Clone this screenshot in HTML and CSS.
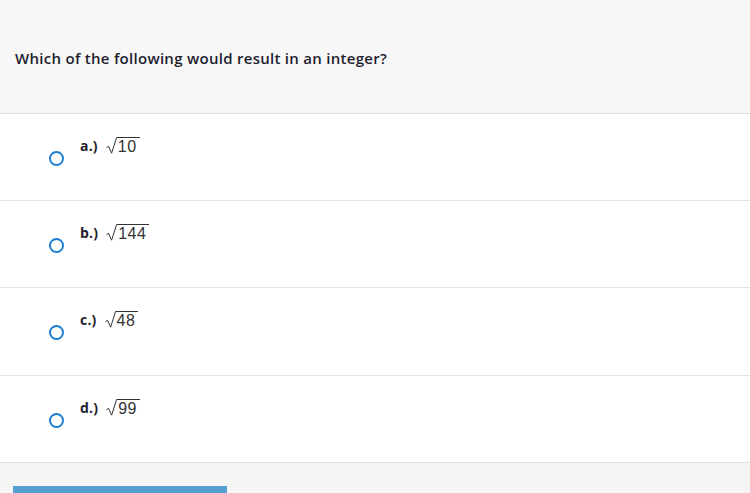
FILE: index.html
```html
<!DOCTYPE html>
<html>
<head>
<meta charset="utf-8">
<link rel="stylesheet" href="styles.css">
</head>
<body>
<div class="page">
  <div class="header">
    <p class="question">Which of the following would result in an integer?</p>
  </div>
  <div class="options">
    <div class="option">
      <span class="radio"></span>
      <span class="label">a.)</span>
      <span class="math"><svg class="rad" viewBox="0 0 11 17" width="11" height="17"><path d="M0.5 10.5 L2.6 9.4 L5.6 16.2 L10.6 0.5 L11 0.5" fill="none" stroke="#333" stroke-width="1"/></svg><span class="radicand">10</span></span>
    </div>
    <div class="option">
      <span class="radio"></span>
      <span class="label">b.)</span>
      <span class="math"><svg class="rad" viewBox="0 0 11 17" width="11" height="17"><path d="M0.5 10.5 L2.6 9.4 L5.6 16.2 L10.6 0.5 L11 0.5" fill="none" stroke="#333" stroke-width="1"/></svg><span class="radicand">144</span></span>
    </div>
    <div class="option tall">
      <span class="radio"></span>
      <span class="label">c.)</span>
      <span class="math"><svg class="rad" viewBox="0 0 11 17" width="11" height="17"><path d="M0.5 10.5 L2.6 9.4 L5.6 16.2 L10.6 0.5 L11 0.5" fill="none" stroke="#333" stroke-width="1"/></svg><span class="radicand">48</span></span>
    </div>
    <div class="option">
      <span class="radio"></span>
      <span class="label">d.)</span>
      <span class="math"><svg class="rad" viewBox="0 0 11 17" width="11" height="17"><path d="M0.5 10.5 L2.6 9.4 L5.6 16.2 L10.6 0.5 L11 0.5" fill="none" stroke="#333" stroke-width="1"/></svg><span class="radicand">99</span></span>
    </div>
  </div>
  <div class="footer">
    <div class="button"></div>
  </div>
</div>
</body>
</html>
```
FILE: styles.css
```css
html, body {
  margin: 0;
  padding: 0;
  background: #ffffff;
}
body {
  font-family: "Open Sans", "Liberation Sans", sans-serif;
  color: #1a1a2a;
  width: 750px;
  height: 493px;
  overflow: hidden;
}
.header {
  background: #f7f7f7;
  height: 113px;
  border-bottom: 1px solid #e0e0e0;
}
.question {
  margin: 0;
  padding: 48px 0 0 15px;
  font-size: 15px;
  font-weight: 600;
  letter-spacing: 0.28px;
  line-height: 20px;
  color: #1e1e2e;
}
.option {
  height: 86px;
  border-bottom: 1px solid #e3e3e3;
  display: flex;
  align-items: flex-start;
  padding-left: 49px;
}
.option.tall {
  height: 87px;
}
.radio {
  box-sizing: border-box;
  width: 15px;
  height: 15px;
  border: 2px solid #1c7fd1;
  border-radius: 50%;
  margin-top: 37px;
  flex: none;
}
.label {
  margin-left: 16px;
  margin-top: 23px;
  font-size: 14px;
  font-weight: 700;
  letter-spacing: 0.2px;
  line-height: 17px;
  color: #1e1e2e;
}
.math {
  margin-left: 8px;
  margin-top: 23px;
  display: flex;
  align-items: flex-start;
  font-family: "Liberation Sans", sans-serif;
  font-size: 16px;
  color: #333;
}
.rad {
  display: block;
  flex: none;
}
.radicand {
  border-top: 1px solid #333;
  line-height: 17px;
  letter-spacing: 0.5px;
  padding: 0 3px 0 1px;
}
.footer {
  background: #f5f5f5;
  height: 8px;
  padding: 23px 0 0 13px;
}
.button {
  width: 214px;
  height: 8px;
  background: #54a0cf;
}
```
